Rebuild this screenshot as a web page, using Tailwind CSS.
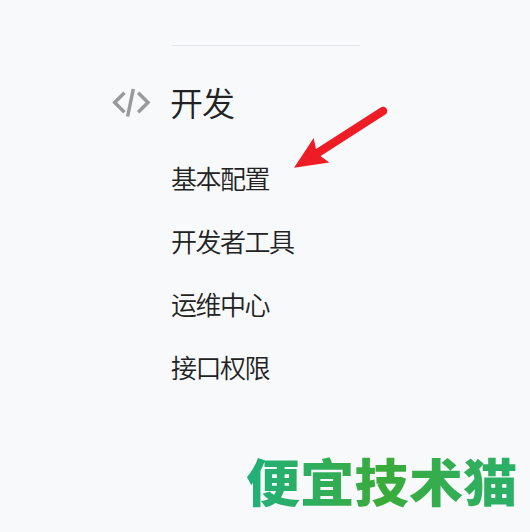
<!DOCTYPE html>
<html lang="zh-CN">
<head>
<meta charset="utf-8">
<title>开发</title>
<script src="https://cdn.jsdelivr.net/npm/@tailwindcss/browser@4"></script>
</head>
<body class="bg-[#f7f9fb]">
<main class="relative w-[530px] h-[532px] overflow-hidden bg-[#f7f9fb] text-[#222] font-['Noto_Sans_CJK_SC',sans-serif]">
  <nav class="pt-[45px] pl-[112px]">
    <div class="ml-[60px] h-px w-[188px] bg-[#e4e6e9]"></div>
    <div class="mt-[31px] flex h-[50px] items-center">
      <svg class="mt-[2px] h-[30px] w-[39px] shrink-0" viewBox="0 0 39 30" fill="none" stroke="#9a9a9a" stroke-width="3.5">
        <path d="M12.5 4.8 2.7 14.5 12.5 24.2M26.2 4.8 36 14.5 26.2 24.2M21.3 1 15.6 28.5"/>
      </svg>
      <h1 class="ml-[19px] text-[33px] leading-[50px] tracking-[-1px] font-[350] whitespace-nowrap">开发</h1>
    </div>
    <ul class="ml-[59px] mt-[19px] text-[26px] leading-[63px] tracking-[-1.5px] font-[350] whitespace-nowrap">
      <li class="h-[63px]">基本配置</li>
      <li class="h-[63px]">开发者工具</li>
      <li class="h-[63px]">运维中心</li>
      <li class="h-[63px]">接口权限</li>
    </ul>
  </nav>
  <svg class="absolute left-[280px] top-[95px] h-[85px] w-[120px]" viewBox="0 0 120 85">
    <path d="M103 16 36 59" stroke="#ee1c25" stroke-width="8.6" stroke-linecap="round"/>
    <path d="M14 72.7 33.7 43 36 54 41 61.5 49.3 67.5Z" fill="#ee1c25"/>
  </svg>
  <div class="absolute left-[246px] top-[440px] origin-center scale-y-[0.95] bg-linear-to-r from-[#20b07a] via-[#3aab38] to-[#2ab069] bg-clip-text text-[54px] leading-[80px] tracking-[0.3px] font-black text-transparent whitespace-nowrap">便宜技术猫</div>
</main>
</body>
</html>
